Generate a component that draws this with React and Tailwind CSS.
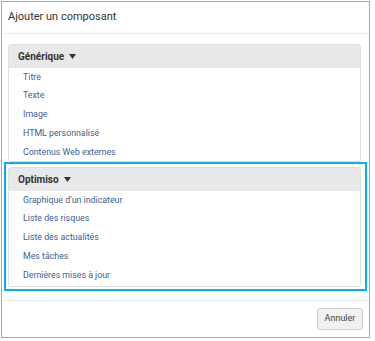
const generique = ['Titre', 'Texte', 'Image', 'HTML personnalisé', 'Contenus Web externes'];
const optimiso = [
  "Graphique d'un indicateur",
  'Liste des risques',
  'Liste des actualités',
  'Mes tâches',
  'Dernières mises à jour',
];

function Caret() {
  return (
    <svg width="7" height="5" viewBox="0 0 7 5" className="ml-[5px]">
      <path d="M0 0 H7 L3.5 5 Z" fill="#333" />
    </svg>
  );
}

function Panel({ title, items, className = '' }) {
  return (
    <div className={`w-[353px] border border-[#dedede] rounded-[3px] bg-white ${className}`}>
      <div className="h-[23px] bg-[#e8e8e8] flex items-center pl-[9px] text-[10px] font-bold text-[#333]">
        {title}
        <Caret />
      </div>
      <ul>
        {items.map((it) => (
          <li key={it} className="h-[18.7px] flex items-center pl-[14px] text-[8.8px] text-[#3d5e90]">
            {it}
          </li>
        ))}
      </ul>
    </div>
  );
}

export default function App() {
  return (
    <div className="w-[375px] h-[341px] bg-white pt-[1px] pl-[1px]" style={{ fontFamily: 'Roboto, "Liberation Sans", sans-serif' }}>
      <div className="w-[369px] h-[337px] border border-[#a6a6a6] flex flex-col">
        {/* Entête */}
        <div className="h-[32px] border-b border-[#ececec] flex items-center pl-[6px] text-[11px] text-[#333]">
          Ajouter un composant
        </div>

        {/* Corps */}
        <div className="flex-1 pt-[10px]">
          <Panel title="Générique" items={generique} className="ml-[6px] h-[118px]" />
          <div className="ml-[2px] w-[363px] border-2 border-[#0aaeec] pt-[3px] pl-[2px] pb-[2px]">
            <Panel title="Optimiso" items={optimiso} className="h-[120px] pb-[3px]" />
          </div>
        </div>

        {/* Pied */}
        <div className="h-[37px] border-t border-[#ececec] flex items-center justify-end pr-[6px]">
          <button className="w-[46px] h-[22px] bg-[#f1f1f1] border border-[#cfcfcf] rounded-[3px] text-[9px] text-[#444]">
            Annuler
          </button>
        </div>
      </div>
    </div>
  );
}
